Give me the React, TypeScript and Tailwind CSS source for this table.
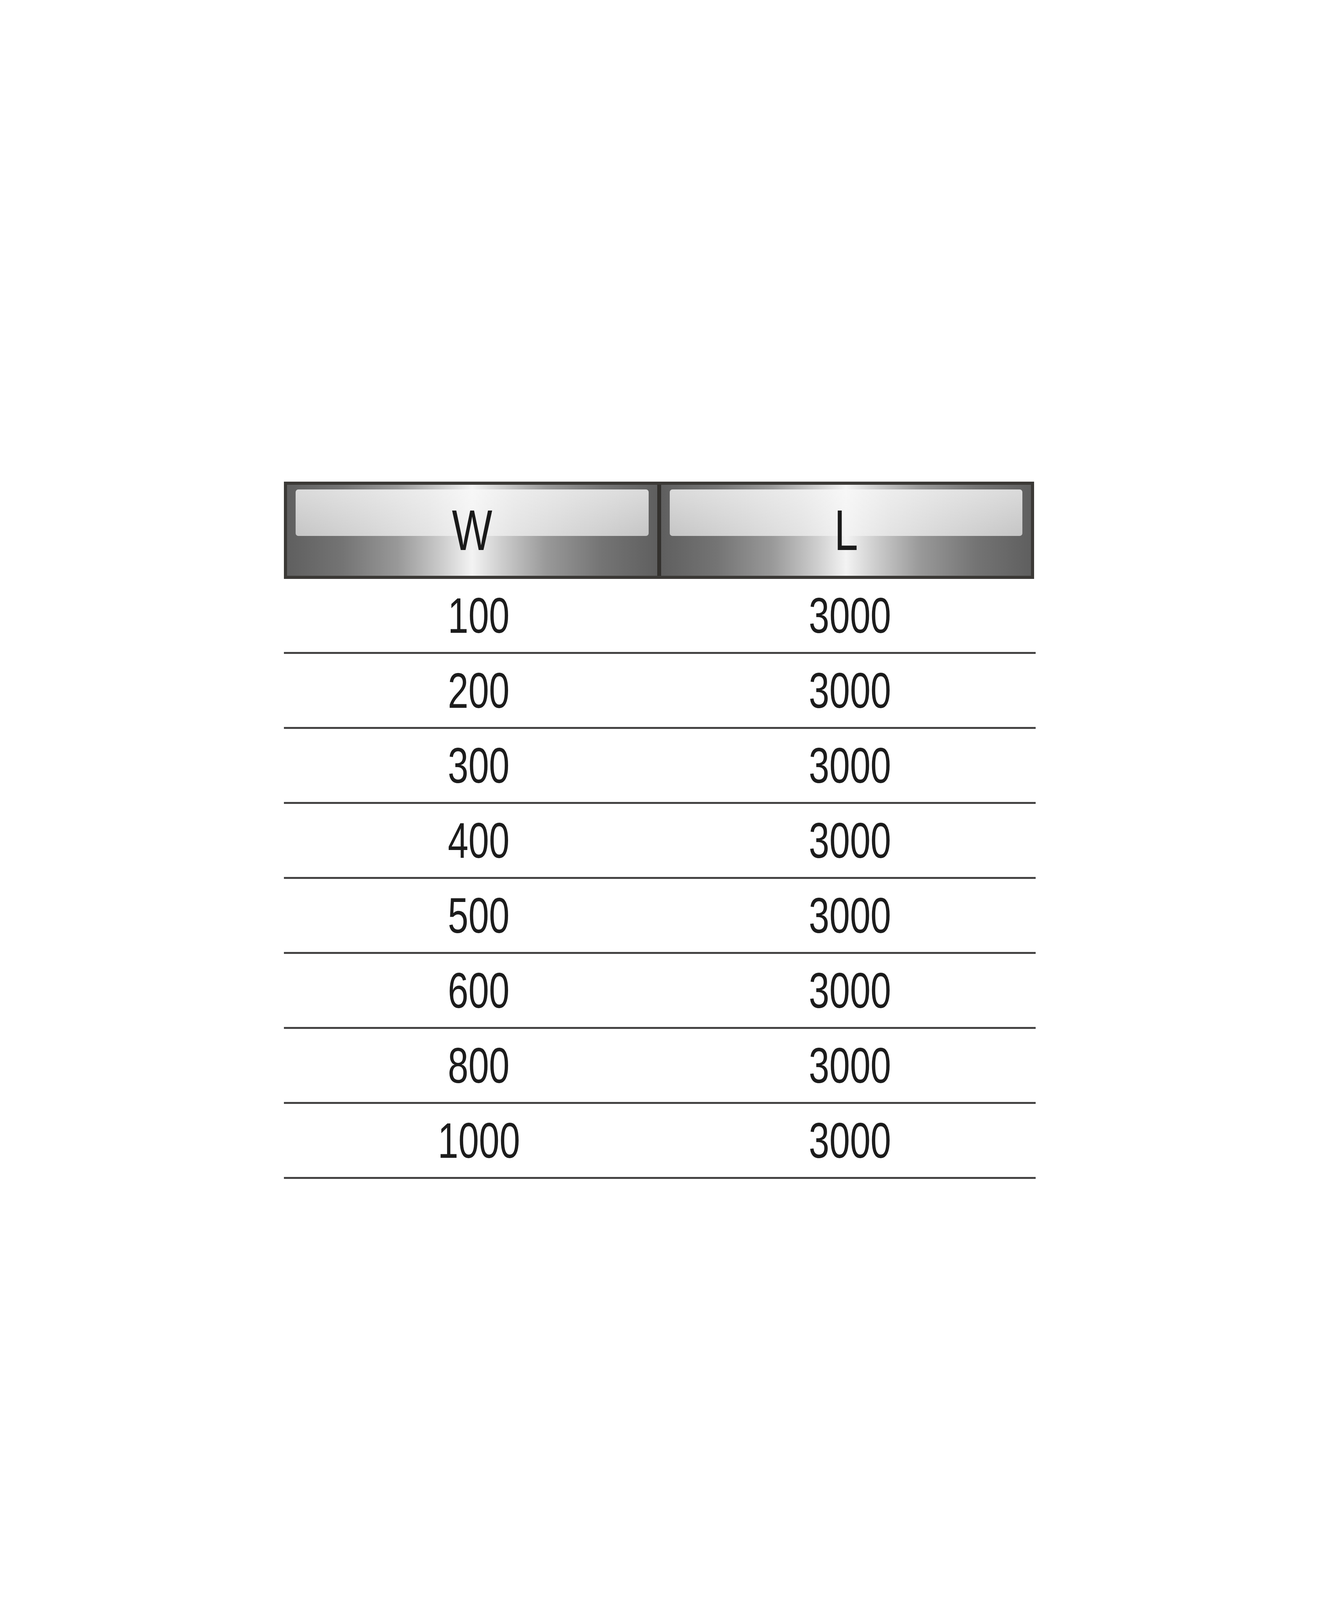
const ROWS = [
  { w: '100', l: '3000' },
  { w: '200', l: '3000' },
  { w: '300', l: '3000' },
  { w: '400', l: '3000' },
  { w: '500', l: '3000' },
  { w: '600', l: '3000' },
  { w: '800', l: '3000' },
  { w: '1000', l: '3000' },
]

// Glossy header cell: metallic horizontal gradient with a lighter bar on top
function HeaderCell({ label }: { label: string }) {
  return (
    <div className="relative flex-1 flex items-center justify-center bg-[linear-gradient(to_right,#5f5f5f,#747474_15%,#999999_30%,#cdcdcd_42%,#f3f3f3_50%,#cdcdcd_58%,#999999_70%,#747474_85%,#5f5f5f)]">
      {/* gloss */}
      <div className="absolute left-[22px] right-[22px] top-[12px] h-[119px] rounded-[7px] bg-[linear-gradient(to_right,#c2c2c2,#d2d2d2_20%,#e2e2e2_38%,#f2f2f2_50%,#e2e2e2_62%,#d2d2d2_80%,#c2c2c2)]">
        <div className="h-full w-full rounded-[7px] bg-[linear-gradient(to_bottom,rgba(255,255,255,0.4),rgba(255,255,255,0.05))]" />
      </div>
      <span className="relative inline-block scale-x-[0.75] text-[146px] leading-none text-[#1a1a1a]">
        {label}
      </span>
    </div>
  )
}

export default function App() {
  return (
    <div className="min-h-[4219px] w-[3375px] bg-white pt-[1233px] pl-[727px] font-['Liberation_Sans',Arial,sans-serif]">
      <div className="w-[1925px]">
        {/* Header */}
        <div className="flex h-[249px] w-[1921px] border-[8px] border-[#3b3936]">
          <HeaderCell label="W" />
          <div className="w-[10px] bg-[#33312e]" />
          <HeaderCell label="L" />
        </div>

        {/* Rows */}
        {ROWS.map((row, i) => (
          <div
            key={i}
            className="flex h-[192px] border-b-[5px] border-[#444343] pl-[24px] text-[128px] leading-none text-[#1c1c1c]"
          >
            <div className="flex-1 flex items-center justify-center">
              <span className="inline-block scale-x-[0.74]">{row.w}</span>
            </div>
            <div className="flex-1 flex items-center justify-center">
              <span className="inline-block scale-x-[0.74]">{row.l}</span>
            </div>
          </div>
        ))}
      </div>
    </div>
  )
}
